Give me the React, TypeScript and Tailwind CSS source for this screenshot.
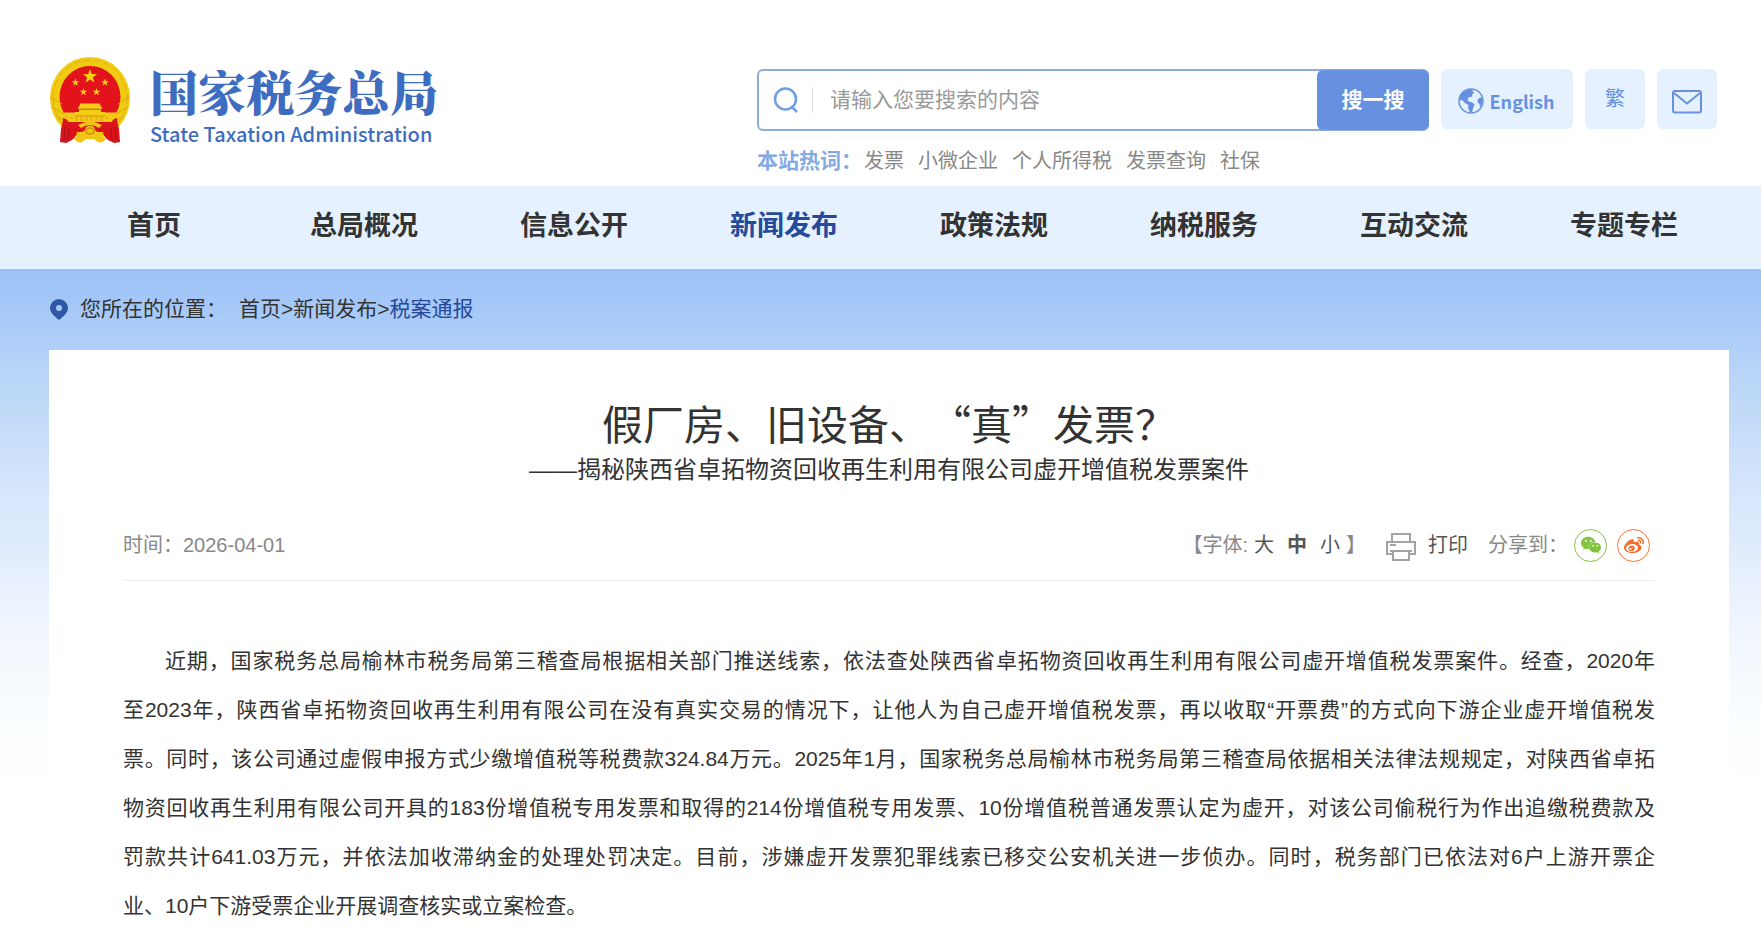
import React from "react";
import { SiSinaweibo, SiWechat } from "react-icons/si";

const nav = ["首页", "总局概况", "信息公开", "新闻发布", "政策法规", "纳税服务", "互动交流", "专题专栏"];
const hotWords = ["发票", "小微企业", "个人所得税", "发票查询", "社保"];
const lines = [
  "近期，国家税务总局榆林市税务局第三稽查局根据相关部门推送线索，依法查处陕西省卓拓物资回收再生利用有限公司虚开增值税发票案件。经查，2020年",
  "至2023年，陕西省卓拓物资回收再生利用有限公司在没有真实交易的情况下，让他人为自己虚开增值税发票，再以收取“开票费”的方式向下游企业虚开增值税发",
  "票。同时，该公司通过虚假申报方式少缴增值税等税费款324.84万元。2025年1月，国家税务总局榆林市税务局第三稽查局依据相关法律法规规定，对陕西省卓拓",
  "物资回收再生利用有限公司开具的183份增值税专用发票和取得的214份增值税专用发票、10份增值税普通发票认定为虚开，对该公司偷税行为作出追缴税费款及",
  "罚款共计641.03万元，并依法加收滞纳金的处理处罚决定。目前，涉嫌虚开发票犯罪线索已移交公安机关进一步侦办。同时，税务部门已依法对6户上游开票企",
  "业、10户下游受票企业开展调查核实或立案检查。",
];

function Star({ x, y, r }: { x: number; y: number; r: number }) {
  const points = Array.from({ length: 10 }, (_, i) => {
    const a = (Math.PI / 5) * i - Math.PI / 2;
    const d = i % 2 ? r * 0.4 : r;
    return `${(x + d * Math.cos(a)).toFixed(2)},${(y + d * Math.sin(a)).toFixed(2)}`;
  }).join(" ");
  return <polygon points={points} fill="#f8d313" />;
}

function Emblem() {
  return (
    <svg viewBox="0 0 80 88" className="h-[88px] w-20 shrink-0" aria-hidden="true">
      <ellipse cx="40" cy="41" rx="40" ry="41" fill="#f1cb12" />
      <ellipse cx="40" cy="41" rx="37" ry="38" fill="none" stroke="#dfb00c" strokeWidth="1" strokeDasharray="7 3" />
      <ellipse cx="40" cy="40" rx="30.5" ry="31" fill="#e2131b" />
      <path d="M1 40l11 7M2 50l14 8M6 59l11 6M79 40l-11 7M78 50l-14 8M74 59l-11 6" stroke="#d9a70c" strokeWidth="1" />
      <Star x={40} y={19.5} r={7.5} />
      <Star x={25.5} y={25.5} r={4} />
      <Star x={55} y={25.5} r={4} />
      <Star x={33.5} y={35} r={4} />
      <Star x={46.5} y={35} r={4} />
      <path d="M30.5 46.5h19l2.500 4.500v1H28v-1zM29 52.500h22v2.500h4v4H25v-4h4z" fill="#f5cd17" />
      <path d="M14 55.500h11v3h30v-3h11v4h-3v6H17v-6h-3z" fill="#f5cd17" />
      <path d="M29 52h22M25 59h30" stroke="#c9720f" strokeWidth="0.7" />
      <path d="M20 61h40M25 63h30" stroke="#d49b10" strokeWidth="0.8" strokeDasharray="3 2" />
      <path d="M15 65h50l-3 10H18z" fill="#d9141b" />
      <path d="M24 82q3-4 8-4l-1-3q3 0 4-2l1-3q4-3 8 0l1 3q1 2 4 2l-1 3q5 0 8 4-4 5-8 3l-4-3h-8l-4 3q-4 2-8-3z" fill="#f1c514" />
      <path d="M28 68q12-7 24 0l-3 3q-9-6-18 0z" fill="#f1c514" />
      <ellipse cx="40" cy="74" rx="4" ry="3" fill="none" stroke="#cf8c12" strokeWidth="1.500" />
      <path d="M13 61l3 1q2 3 6 5 3 5 5 9-2 6-7 8l-4 2-6-1 1-13 2-9z" fill="#d9141b" />
      <path d="M67 61l-3 1q-2 3-6 5-3 5-5 9 2 6 7 8l4 2 6-1-1-13-2-9z" fill="#d9141b" />
      <path d="M15 70l-1 14M19 71l-1 13M65 70l1 14M61 71l1 13" stroke="#b00f15" strokeWidth="1" />
    </svg>
  );
}

function Globe() {
  return (
    <svg viewBox="0 0 26 26" className="size-[26px]" aria-hidden="true">
      <circle cx="13" cy="13" r="12" fill="none" stroke="#6791e0" strokeWidth="1.500" />
      <path d="M15 1.200C6 .5 1.300 6 1.200 12l3 .3 3.300 3.200 3 1.500-.5 3 2 4.500 2-.2 1.500-5.500 1-2.300-2.500-2.200-3.300-.7-1.200-2 1.200-2.300 3-.5.8-2.500 1.500-1.500-1.600-2z" fill="#6791e0" />
      <path d="M24 9.500l-2.500.2-2 2.300.3 2.500 1.700 1.500.5 3.500q3.500-5 2-10z" fill="#6791e0" />
    </svg>
  );
}

export default function App() {
  return (
    <div className="min-h-screen bg-white font-['Liberation_Sans','Noto_Sans_CJK_SC',sans-serif] text-[#333]">
      <header className="flex h-[186px] items-start justify-between pl-[50px] pr-11">
        <a href="#" className="mt-[57px] flex items-start gap-5">
          <Emblem />
          <span className="flex flex-col text-[#3d6cc0]">
            <span className="mt-1 font-['Noto_Serif_CJK_SC','Noto_Sans_CJK_SC',serif] text-[48px] font-black leading-[60px]">国家税务总局</span>
            <span className="font-['Noto_Sans_CJK_SC',sans-serif] text-[20px] font-medium leading-[26px]">State Taxation Administration</span>
          </span>
        </a>
        <div className="mt-[69px]">
          <div className="flex gap-3">
            <form className="flex h-[62px] w-[672px] rounded-md border-2 border-[#8eaadf]" onSubmit={(e) => e.preventDefault()}>
              <label htmlFor="search" className="my-4 flex w-[54px] items-center border-r border-[#ddd] pl-[14px]">
                <svg viewBox="0 0 26 26" className="size-[26px]" fill="none" stroke="#6f9fe0" strokeWidth="2.500" aria-label="搜索">
                  <circle cx="12.500" cy="12" r="10.500" />
                  <path d="M18.500 19.500 24 25" />
                </svg>
              </label>
              <input id="search" placeholder="请输入您要搜索的内容" className="min-w-0 flex-1 pl-[17px] text-[21px] outline-none placeholder:text-[#999]" />
              <button className="-my-px -mr-0.5 w-28 rounded-md bg-[#6791e0] text-[21px] font-bold text-white">搜一搜</button>
            </form>
            <a href="#" className="flex h-[60px] w-[132px] items-center justify-center gap-1.5 rounded-md bg-[#e5f1fe] pr-0.5 pt-1 font-['Noto_Sans_CJK_SC',sans-serif] text-[18px] font-bold text-[#6791e0]">
              <Globe />
              English
            </a>
            <button className="h-[60px] w-[60px] rounded-md bg-[#e5f1fe] text-[20px] text-[#6791e0]">繁</button>
            <a href="#" aria-label="邮箱" className="flex h-[60px] w-[60px] items-center justify-center rounded-md bg-[#e5f1fe] pt-[5px]">
              <svg viewBox="0 0 30 24" className="h-6 w-[30px]" fill="none" stroke="#6791e0" strokeWidth="2">
                <rect x="1" y="1" width="28" height="21.500" rx="2" />
                <path d="M2 3l13 10.500L28 3" />
              </svg>
            </a>
          </div>
          <div className="mt-[15px] flex items-center gap-0.5 text-[20px] leading-[30px] text-[#888]">
            <span className="text-[21px] font-bold text-[#84aae4]">本站热词：</span>
            <span className="flex gap-[14px]">
              {hotWords.map((w) => <a key={w} href="#">{w}</a>)}
            </span>
          </div>
        </div>
      </header>

      <nav className="h-[83px] bg-[#e5f1fe] pl-[49px] pr-8">
        <ul className="grid grid-cols-8 text-center text-[27px] font-bold leading-[80px]">
          {nav.map((n) => (
            <li key={n}><a href="#" className={n === "新闻发布" ? "text-[#254a9b]" : ""}>{n}</a></li>
          ))}
        </ul>
      </nav>

      <main className="bg-[linear-gradient(to_bottom,#9bc1f6_0px,#b1d0f9_80px,#bdd8f7_126px,#d3e4fb_212px,#e9f1fd_320px,#f4f8fe_385px,#fafdff_450px,#ffffff_530px)] pl-[49px] pr-8">
        <div className="flex h-[81px] items-center pb-0.5 text-[21px] leading-8">
          <svg viewBox="0 0 20 22" className="mr-[11px] h-[22px] w-5" aria-hidden="true">
            <path fillRule="evenodd" d="M10 1a9 9 0 0 1 9 9c0 4.500-4.500 8.500-9 12-4.500-3.500-9-7.500-9-12a9 9 0 0 1 9-9zm0 6a3 3 0 1 0 0 6 3 3 0 0 0 0-6z" fill="#2f57a6" />
          </svg>
          <span className="mr-3">您所在的位置：</span>
          <a href="#">首页</a>&gt;<a href="#">新闻发布</a>&gt;<a href="#" className="text-[#254a9b]">税案通报</a>
        </div>
        <article className="bg-white px-[74px] pt-[42px]">
          <h1 className="text-center text-[41px] leading-[60px] [text-spacing-trim:space-all] font-['Noto_Sans_CJK_SC',sans-serif]">假厂房、旧设备、“真”发票？</h1>
          <p className="mt-0.5 text-center text-[24px] leading-8">——揭秘陕西省卓拓物资回收再生利用有限公司虚开增值税发票案件</p>
          <div className="mt-[22px] flex h-[73px] items-center justify-between border-b border-[#eee] text-[20px] text-[#888]">
            <span className="pt-0.5">时间：2026-04-01</span>
            <div className="flex items-center pt-0.5">
              <span>【字体:</span>
              <button className="ml-1.5 text-[#555]">大</button>
              <button className="ml-[13px] font-bold text-[#555]">中</button>
              <button className="ml-[13px] text-[#555]">小</button>
              <span className="ml-1.5">】</span>
              <button className="ml-5 flex items-center gap-3 text-[#555]">
                <svg viewBox="0 0 30 28" className="mt-1 h-7 w-[30px]" fill="none" stroke="#a3a3a3" strokeWidth="2" aria-hidden="true">
                  <path d="M6 9V1h18v8M6 21H1V9h28v12h-5M4 12h6" />
                  <path d="M7 18h16v9H7zM4 18h22" />
                </svg>
                打印
              </button>
              <span className="ml-5">分享到：</span>
              <a href="#" aria-label="微信" className="ml-1.5 flex size-[33px] items-center justify-center rounded-full border border-[#84c341] text-[#84c341]"><SiWechat size={20} /></a>
              <a href="#" aria-label="微博" className="ml-2.5 mr-[5px] flex size-[33px] items-center justify-center rounded-full border border-[#f4743b] text-[#f96b2b]"><SiSinaweibo size={20} /></a>
            </div>
          </div>
          <p className="pt-[55px] text-[21px] leading-[49px]">
            {lines.map((line, i) => (
              <span key={line} className={i === 0 ? "block indent-[2em] [text-align-last:justify]" : i === 5 ? "block" : "block [text-align-last:justify]"}>{line}</span>
            ))}
          </p>
        </article>
      </main>
    </div>
  );
}
